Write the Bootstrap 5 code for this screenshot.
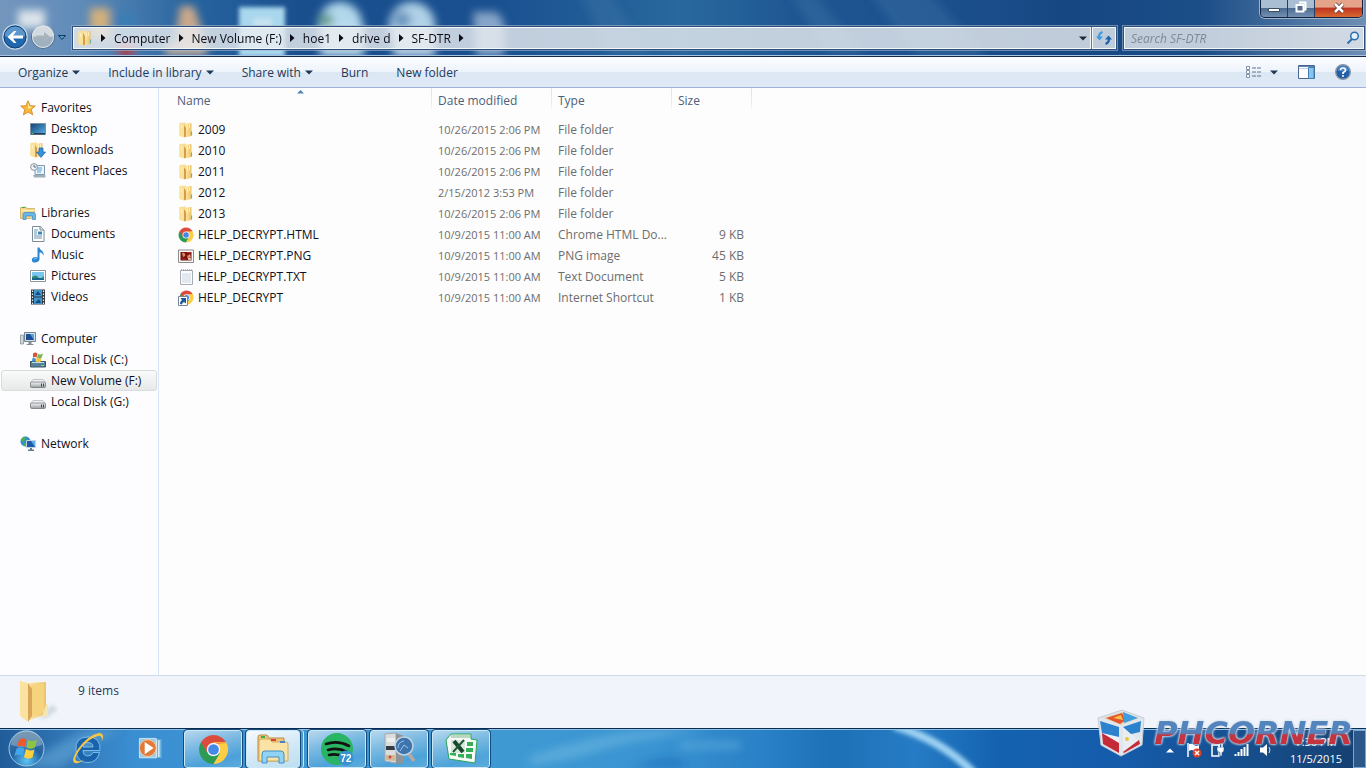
<!DOCTYPE html>
<html lang="en">
<head>
<meta charset="utf-8">
<meta name="viewport" content="width=device-width, initial-scale=1">
<title>SF-DTR</title>
<link href="https://cdn.jsdelivr.net/npm/bootstrap@5.3.0/dist/css/bootstrap.min.css" rel="stylesheet">
<style>
  body { font-family: "Open Sans", "Noto Sans", sans-serif; font-size: 12px; line-height: 21px; color: #101020; background: #fdfdfd; }
  svg { display: block; flex: none; }
  button { font: inherit; color: inherit; background: none; border: 0; padding: 0; }
  .i16 { width: 16px; height: 16px; }
  .i32 { width: 34px; height: 34px; }
  .wallpaper { z-index: 0; }

  /* glass frame with navigation */
  .frame-top { height: 57px; padding: 0 1px 6px 2px; background: #1c4f8d; border-bottom: 1px solid #14294a; box-shadow: inset 0 -1px 0 #a9c4de; gap: 6px; }
  .win-ctl { top: 0; right: 3px; height: 18px; border: 1px solid #13233f; border-top: 0; border-radius: 0 0 5px 5px; box-shadow: 0 0 0 1px #9db4cf; overflow: hidden; }
  .win-ctl button { width: 27px; border-right: 1px solid #24405f; background: linear-gradient(#a9bdd3 45%, #4d6c92 50%, #7391b2); }
  .win-ctl .close-btn { width: 47px; border: 0; background: linear-gradient(#e5a48a 40%, #bf3520 50%, #d9692f); }
  .nav-btns { gap: 2px; }
  .address { height: 24px; border: 1px solid #2c4f7c; box-shadow: 0 0 0 1px #a5b6ca99; }
  .address .wash { background: rgba(235, 238, 240, .8); box-shadow: inset 0 0 0 1px #f4f7fa; }
  .address .refresh { border-left: 1px solid #5d7a9c; }
  .crumb { color: #0a0a14; }
  .search-box { width: 242px; }
  .search-box input { border: 0; background: none; font-style: italic; color: #101020; padding: 0 0 0 7px; outline: 0; }
  .search-box input::placeholder { color: #7d8a93; opacity: 1; }

  /* command bar */
  .commands { height: 31px; color: #1e395b; padding: 0 15px 0 18px; background: linear-gradient(#fbfdff, #eef4fc 48%, #dce7f4 52%, #e0eaf6); border-bottom: 1px solid #9fb4d6; }
  .commands .cmds { gap: 28px; }
  .commands button { display: flex; align-items: center; gap: 4px; }

  /* navigation pane */
  .side { width: 159px; border-right: 1px solid #d6e5f5; padding: 9px 1px 0; background: #fdfdff; }
  .side ul { margin: 0 0 21px; padding: 0; list-style: none; }
  .side a { display: flex; align-items: center; gap: 5px; height: 21px; padding-left: 28px; color: #101020; text-decoration: none; border: 1px solid transparent; border-radius: 3px; white-space: nowrap; }
  .side a.top-item { padding-left: 18px; }
  .side a.current { border-color: #d9dbdd; background: linear-gradient(#f9fafa, #e7e9e9); }

  /* file list */
  .files { width: 593px; table-layout: fixed; border-collapse: collapse; margin: 0; }
  .files th { height: 31px; font-weight: 400; color: #4c607a; vertical-align: top; padding: 2px 6px 0; background: linear-gradient(#d8e5f3, #e8eff8 70%, #fdfdfd) right top / 1px 24px no-repeat; }
  .files td { height: 21px; padding: 0 6px; color: #6d6d6d; white-space: nowrap; }
  .files th:first-child { padding-left: 18px; }
  .files td:first-child { padding-left: 19px; color: #101020; }
  .files td:nth-child(2) { font-size: 11px; }
  .files .fname { gap: 4px; }
  .files td:last-child { text-align: right; padding-right: 8px; }
  .sort-mark { top: 2px; left: 138px; }

  .details { height: 53px; background: #f1f5fb; border-top: 1px solid #ccdaea; padding: 4px 18px; gap: 20px; color: #1e395b; }

  /* taskbar */
  .taskbar { height: 40px; border-top: 1px solid #0b2c50; background: #1560ad; box-shadow: inset 0 1px 0 #8fc0e6; padding: 0 13px 0 0; }
  .slot { width: 62px; }
  .start { width: 53px; }
  .tasks { gap: 4px; padding: 1px 0 0 3px; }
  .task { width: 58px; border: 1px solid #cbe8f8; outline: 1px solid #164a7c; border-radius: 3px; background: linear-gradient(165deg, #c9e2f2dd, #8fc5e6bb 40%, #58aadd99 75%, #6bb6e2aa); }
  .task.active { background: linear-gradient(160deg, #f6fafe, #cfe7f5 60%, #bcdff2); width: 54px; margin-right: 4px; box-shadow: 3px 0 0 #4f9bd0, 4px 0 0 #cbe8f8; }
  .tray { color: #fff; gap: 8px; margin-right: 11px; padding-top: 3px; }
  .clock { font-size: 11px; line-height: 17px; text-align: center; padding-left: 9px; }
  .peek { right: 0; top: 1px; bottom: 0; width: 13px; border: 1px solid #7ca6cc; background: #5b88b955; }
  .brand { right: 13px; bottom: 11px; z-index: 5; gap: 8px; pointer-events: none; }
  .brand-word { font: italic bold 32px/36px "DejaVu Sans", sans-serif; color: transparent; background: linear-gradient(#5484bd 50%, #c33440 56%); -webkit-background-clip: text; background-clip: text; filter: drop-shadow(0 0 1px #e6edf4) drop-shadow(0 0 1px #c9d6e4); }
</style>
</head>
<body>
<svg width="0" height="0" class="position-absolute" aria-hidden="true">
  <defs>
    <linearGradient id="gf" x1="0" x2="1"><stop offset="0" stop-color="#fce9a8"/><stop offset="1" stop-color="#eec267"/></linearGradient>
    <linearGradient id="gb" x1="0" y1="0" x2="1" y2="1"><stop offset="0" stop-color="#14406f"/><stop offset="1" stop-color="#59b2ec"/></linearGradient>
    <linearGradient id="gd" x1="0" y1="0" x2="0" y2="1"><stop offset="0" stop-color="#f5f5f5"/><stop offset="1" stop-color="#999fa3"/></linearGradient>
    <radialGradient id="orb" cx=".5" cy=".85" r=".85"><stop offset="0" stop-color="#5cc4f5"/><stop offset=".5" stop-color="#2264a3"/><stop offset="1" stop-color="#4e7295"/></radialGradient>
    <filter id="b4" x="-30%" y="-30%" width="160%" height="160%"><feGaussianBlur stdDeviation="4"/></filter>
    <filter id="b2" x="-30%" y="-30%" width="160%" height="160%"><feGaussianBlur stdDeviation="2"/></filter>
  </defs>
  <symbol id="folder" viewBox="0 0 16 16"><path d="M1.500 1 8 .500v13L1.500 14z" fill="#f9dd92"/><path d="M7 2 13.500 1v13L7 15.500z" fill="url(#gf)"/><path d="M1.500 1.500 6 3v12.500L1.500 14z" fill="#fae29b"/><path d="M6 3 8 6v8.500l-2 1z" fill="#d79b4c"/><path d="M9.500 2.500v5M11.500 2v4" stroke="#fff0b8"/><path d="M3.500 3v4" stroke="#fdf0c0"/><path d="M13.500 9.500v4" stroke="#6daea9" stroke-width="1.200"/></symbol>
  <symbol id="star" viewBox="0 0 16 16"><path d="M8 .8 10.100 5.700l5.200.3-4 3.500 1.400 5.300L8 12l-4.600 2.900 1.300-5.300L.7 6l5.200-.3z" fill="#f8b93b" stroke="#cf7d1d" stroke-width=".8"/><path d="M8 2.500 9.300 6.500 13 7 8 9z" fill="#ffe994"/></symbol>
  <symbol id="desktop" viewBox="0 0 16 16"><path d="M.5 2.500h15v11H.5z" fill="url(#gb)" stroke="#7b93a3"/><path d="M1 12h14v1.500H1z" fill="#223a53"/><path d="M1.500 12.500h2" stroke="#59c06b"/></symbol>
  <symbol id="downloads" viewBox="0 0 16 16"><use href="#folder" x="-1"/><path d="M9 6h4v4h2.500L11 15.500 6.500 10H9z" fill="#3592dc" stroke="#1b63a8" stroke-width=".7"/></symbol>
  <symbol id="recent" viewBox="0 0 16 16"><path d="M5 2.500h9.500v9H5z" fill="#eaf4fb" stroke="#7f97ab"/><path d="M7 5h5M7 7h5M7 9h4" stroke="#59a0d4"/><path d="M3 12h12.500v2.500H4z" fill="#9fb0bb"/><circle cx="4" cy="4" r="3.400" fill="#eef3f5" stroke="#8595a1"/><path d="M4 2v2h2" fill="none" stroke="#567"/></symbol>
  <symbol id="libraries" viewBox="0 0 16 16"><path d="M.5 2.500 6 2l1 1.500h7.500v10H.5z" fill="#f5d789" stroke="#c9a052" stroke-width=".7"/><path d="M2 2.500h3" stroke="#46a84c"/><path d="M1 5.500h14" stroke="#fff2bf"/><path d="M3 14.500V9.500q0-2 2-2h8q2.500 0 2.500 2v5h-3V11H6v3.500z" fill="#66b7ea" stroke="#3c86c0" stroke-width=".7"/></symbol>
  <symbol id="document" viewBox="0 0 16 16"><path d="M2.500.5h8l3.500 3.500v11.500H2.500z" fill="#fff" stroke="#7d8c98"/><path d="M10 .5V4h4" fill="#dfe6eb" stroke="#7d8c98"/><path d="M4 4h4M4 6h3M4 8h3M4 10h8M4 12h8" stroke="#6c91ab"/><path d="M8 5.500h4v3H8z" fill="#3c87b9"/></symbol>
  <symbol id="music" viewBox="0 0 16 16"><path d="M7.500.5h2c.5 3 5 3.500 4 8-1-2.500-2.500-3-4-3v6.500c0 2-2 3.500-4.500 3.500S1.500 14 2 12.300s3-2.800 5.500-1.800z" fill="#2c86d1"/><path d="M4 12.500q1-1.500 3-1.500" stroke="#9ad3fa" fill="none"/></symbol>
  <symbol id="picture" viewBox="0 0 16 16"><path d="M.5 2.500h15v11H.5z" fill="#fff" stroke="#8a979f"/><path d="M2 4h12v8H2z" fill="#79c5ec"/><path d="M2 9q4-3 6 0t6-1v4H2z" fill="#2f8a6c"/><path d="M2 10.500q6-1 12 .5v1H2z" fill="#176094"/></symbol>
  <symbol id="video" viewBox="0 0 16 16"><path d="M1 .5h14v15H1z" fill="#30373d"/><path d="M4 1h8v6.500H4zM4 8.500h8V15H4z" fill="#3d95d1"/><path d="M5 6 8 2l3 4M5 14l4-4 2 4" fill="#184b78"/><path d="M2.500 1.500v14M13.500 1.500v14" stroke="#eee" stroke-width="1.200" stroke-dasharray="1.500 1.500"/></symbol>
  <symbol id="computer" viewBox="0 0 16 16"><path d="M.5 4h3v9h-3z" fill="#d0d7da" stroke="#78878f" stroke-width=".7"/><path d="M4.500 1.500h11v9h-11z" fill="#d5e0e6" stroke="#74868f"/><path d="M6 3h8v6H6z" fill="#1c4f95"/><path d="M10 3h4v6z" fill="#57a3df"/><path d="M8.500 11h3v2h2v1h-7v-1h2z" fill="#7f9199"/></symbol>
  <symbol id="drive" viewBox="0 0 16 16"><path d="M3 6.500h10l2.500 3.500H.5z" fill="#f2f3f3" stroke="#a2a7aa" stroke-width=".6"/><path d="M.5 10q0-1 1-1h13q1 0 1 1v3q0 1.500-1 1.500h-13q-1 0-1-1.500z" fill="url(#gd)" stroke="#74797d" stroke-width=".8"/><path d="M11.500 10.500v3M13.500 10.500v3" stroke="#3b4b48"/></symbol>
  <symbol id="sysdrive" viewBox="0 0 16 16"><path d="M.5 9.500h15v5.500H.5z" fill="#58819b" stroke="#3e5563"/><path d="M2 10.500h12" stroke="#bfe1e9"/><path d="M11 13.500h3" stroke="#6fd47a"/><path d="M3 1.500q2-2 4.500 0l-1 4q-2-1-3.500.5z" fill="#dc5437"/><path d="M8 2q2 1 5-.5L11.500 6Q9 8 7 5.500z" fill="#7db858"/><path d="m2.500 6 3.500.5-.5 3H2z" fill="#3f90ce"/><path d="M6.500 6 11.500 6.500 10.500 10H6z" fill="#f1c43d"/></symbol>
  <symbol id="network" viewBox="0 0 16 16"><circle cx="5.500" cy="5.500" r="5" fill="#2f8fd0"/><path d="M2 2q3-2 4-1L5 4 2 6.500zM3 8l3-1 1 3-2 .5z" fill="#48b057"/><path d="M6.500 4.500h9v7h-9z" fill="#1d5ba8" stroke="#c3d5e1"/><path d="M11 5h4v6z" fill="#5cb0ea"/><path d="M10 12h2v1.500h2v1.500H8v-1.500h2z" fill="#5c7e92"/></symbol>
  <symbol id="chrome" viewBox="0 0 32 32"><path d="M16 16 3.100 8.500A15 15 0 0 1 29 8.500z" fill="#dd4b3e"/><path d="M16 16 3.100 8.500A15 15 0 0 0 16 31l6.500-11z" fill="#2c9c55"/><path d="M16 16 22.500 20 16 31A15 15 0 0 0 29 8.500H16z" fill="#fdcd45"/><path d="M3.100 8.500 10 20l4-10h15" fill="#dd4b3e"/><circle cx="16" cy="16" r="7" fill="#f5f5f5"/><circle cx="16" cy="16" r="5.500" fill="#4589e8"/></symbol>
  <symbol id="pngfile" viewBox="0 0 16 16"><path d="M.5 2h15v12.500H.5z" fill="#f8f8f8" stroke="#8d8d8d"/><path d="M2.500 4h11v8.500h-11z" fill="#76150f"/><path d="M4 5q2-1 3 1t-2 3zM9 8l3-2 1 3-3 2z" fill="#dc8b6d"/><path d="M9 4.500h4M4 11h4" stroke="#b32c24"/><path d="M10 11h3" stroke="#f6e6de" stroke-width="1.500"/></symbol>
  <symbol id="txtfile" viewBox="0 0 16 16"><path d="M2.500 1.500h12v14h-12z" fill="#fdfdfd" stroke="#a6adb4"/><path d="M4 5h9M4 7h9M4 9h9M4 11h9M4 13h9" stroke="#c6d3df"/><path d="M3 1h11" stroke="#7d868e" stroke-dasharray="1 1"/></symbol>
  <symbol id="urlfile" viewBox="0 0 16 16"><use href="#chrome" x="1" width="15" height="15"/><path d="M.5 6.500h9v9h-9z" fill="#fff" stroke="#768596"/><path d="M2 14q0-3 2-4L2.500 8H8v5.500L6 12q-2 .5-2 2.500z" fill="#1b5799"/></symbol>
  <symbol id="caret" viewBox="0 0 8 5"><path d="M0 .5h8L4 4.500z"/></symbol>
  <symbol id="sep" viewBox="0 0 5 8"><path d="M0 0 4.500 4 0 8z" fill="#0a0a14"/></symbol>
</svg>

<div class="d-flex flex-column vh-100 overflow-hidden position-relative">
  <header class="frame-top position-relative d-flex align-items-end flex-shrink-0">
    <svg class="wallpaper position-absolute top-0 start-0 w-100" height="55" viewBox="0 0 1366 55" preserveAspectRatio="none" aria-hidden="true">
      <linearGradient id="sky"><stop offset="0" stop-color="#7496bd"/><stop offset=".06" stop-color="#5f8bb9"/><stop offset=".14" stop-color="#27649f"/><stop offset=".22" stop-color="#1a4f8e"/><stop offset=".36" stop-color="#1a5090"/><stop offset=".5" stop-color="#28689e"/><stop offset=".58" stop-color="#1f5793"/><stop offset=".7" stop-color="#1b4f8c"/><stop offset=".78" stop-color="#164783"/><stop offset=".88" stop-color="#1b4d87"/><stop offset="1" stop-color="#6f8fb4"/></linearGradient>
      <path d="M0 0h1366v55H0z" fill="url(#sky)"/>
      <g filter="url(#b4)">
        <path d="M580-5h30l40 60h-40zM790-5h25l50 60h-35zM870-5h60l60 65h-70z" fill="#4679a8" opacity=".35"/>
        <path d="M18 10h27v18H18z" fill="#dce4ea"/><path d="M90 8h20v30H90z" fill="#d2b07c"/><path d="M116 12h20v44h-20z" fill="#3a7eb4"/><path d="M118 44h16v12h-16z" fill="#b23434"/>
        <path d="M180 6h14l14 44h-34z" fill="#cba88b"/><path d="M165 44h42v11h-42z" fill="#cdb29d"/>
        <circle cx="340" cy="24" r="22" fill="#b2d8ec"/><path d="M320 26h44v30h-44z" fill="#c2deed"/><circle cx="326" cy="20" r="7" fill="#5e9a86"/>
        <circle cx="412" cy="25" r="23" fill="#b0d1e7"/><path d="M393 28h42v28h-42z" fill="#c2d9ea"/><circle cx="402" cy="20" r="9" fill="#6b95be"/>
        <path d="M473 12h24l7 10v34h-28z" fill="#87a5c8"/>
      </g>
      <path d="M239 7h46v50h-46z" fill="#a9d7ed" filter="url(#b2)"/>
      <path d="M253 18h19v10h-19z" fill="#c5e2f0" filter="url(#b2)"/>
    </svg>
    <div class="win-ctl position-absolute d-flex">
      <button aria-label="Minimize" class="d-flex justify-content-center"><svg width="14" height="14"><path d="M1.500 8.500h11v3h-11z" fill="#fff" stroke="#3d4d61"/></svg></button>
      <button aria-label="Restore" class="d-flex justify-content-center"><svg width="14" height="14"><path d="M5 2.500h6.500v7H10" fill="none" stroke="#fff" stroke-width="2"/><path d="M2.500 5h7v6.500h-7z" fill="#536f92" stroke="#fff" stroke-width="2"/></svg></button>
      <button aria-label="Close" class="close-btn d-flex justify-content-center"><svg width="14" height="15"><path d="m3 4 8 8m0-8-8 8" stroke="#5d3334" stroke-width="4"/><path d="m3 4 8 8m0-8-8 8" stroke="#fff" stroke-width="2.500"/></svg></button>
    </div>
    <div class="nav-btns position-relative d-flex align-items-center">
      <button aria-label="Back"><svg width="26" height="26" viewBox="0 0 26 26"><circle cx="13" cy="13" r="12" fill="#2068b0" stroke="#c7d9e8" stroke-width="1.500"/><path d="M2 12a11 11 0 0 1 22 0q-11 4-22 0z" fill="#75abd8" opacity=".7"/><circle cx="13" cy="13" r="11" fill="none" stroke="#123f71"/><path d="M5.500 13 12 7h2.500l-3.500 4.500H21v3H11l3.500 4.500H12z" fill="#fff"/></svg></button>
      <button aria-label="Forward"><svg width="26" height="26" viewBox="0 0 26 26"><circle cx="13" cy="13" r="11.500" fill="#9fb0c1" stroke="#4f6b8b"/><path d="M2 12a11 11 0 0 1 22 0q-11 4-22 0z" fill="#d3dae0"/><circle cx="13" cy="13" r="10.500" fill="none" stroke="#dde5eb"/><path d="M20.500 13 14 8v3.500H6v3h8V18z" fill="#a9b3bc"/></svg></button>
      <button aria-label="Recent pages"><svg width="8" height="5" viewBox="0 0 8 5"><path d="M.5.5h7l-3.500 4z" fill="#4ea0d0" stroke="#12375f"/></svg></button>
    </div>
    <div class="address position-relative flex-grow-1 d-flex">
      <nav class="wash flex-grow-1 d-flex align-items-center ps-1" aria-label="Address">
        <svg class="i16 me-1"><use href="#folder"/></svg>
        <svg class="ms-1" width="5" height="8"><use href="#sep"/></svg>
        <button class="crumb ms-2">Computer</button><svg class="ms-2" width="5" height="8"><use href="#sep"/></svg>
        <button class="crumb ms-2">New Volume (F:)</button><svg class="ms-2" width="5" height="8"><use href="#sep"/></svg>
        <button class="crumb ms-2">hoe1</button><svg class="ms-2" width="5" height="8"><use href="#sep"/></svg>
        <button class="crumb ms-2">drive d</button><svg class="ms-2" width="5" height="8"><use href="#sep"/></svg>
        <button class="crumb ms-2">SF-DTR</button><svg class="ms-2" width="5" height="8"><use href="#sep"/></svg>
        <button class="ms-auto" aria-label="Previous locations"><svg class="mx-1" width="8" height="5"><use href="#caret" fill="#1a2a3c"/></svg></button>
      </nav>
      <button class="wash refresh px-1" aria-label="Refresh"><svg width="16" height="16" viewBox="0 0 16 16"><path d="M3 8Q2.500 3.500 6.500 2" fill="none" stroke="#3f9bdc" stroke-width="2.200"/><path d="M0 6.500h7L3.500 10.500z" fill="#3f9bdc"/><path d="M13 8q.5 4.500-3.500 6" fill="none" stroke="#1b64ae" stroke-width="2.200"/><path d="M9 9.500h7L12.500 5.500z" fill="#1b64ae"/></svg></button>
    </div>
    <div class="address search-box position-relative d-flex">
      <div class="wash flex-grow-1 d-flex align-items-center">
        <input type="search" class="flex-grow-1" aria-label="Search" placeholder="Search SF-DTR">
        <svg class="me-1" width="14" height="14" viewBox="0 0 14 14"><circle cx="8.500" cy="5" r="3.800" fill="#e4f1fa" stroke="#2a6fae" stroke-width="1.500"/><path d="M6 8 1.500 12.500" stroke="#2a6fae" stroke-width="2"/></svg>
      </div>
    </div>
  </header>

  <div class="commands d-flex align-items-center justify-content-between flex-shrink-0">
    <div class="cmds d-flex">
      <button>Organize <svg width="8" height="5" fill="#1e395b"><use href="#caret"/></svg></button>
      <button>Include in library <svg width="8" height="5" fill="#1e395b"><use href="#caret"/></svg></button>
      <button>Share with <svg width="8" height="5" fill="#1e395b"><use href="#caret"/></svg></button>
      <button>Burn</button>
      <button>New folder</button>
    </div>
    <div class="d-flex align-items-center">
      <button aria-label="Change view"><svg width="16" height="14" viewBox="0 0 16 14"><path d="M.5 1.500h3v3h-3zM.5 5.500h3v3h-3zM.5 9.500h3v3h-3z" fill="#fff" stroke="#8792ab"/><path d="M6 3h4M11 3h4M6 7h4M11 7h4M6 11h4M11 11h4" stroke="#5f7391"/></svg></button>
      <button class="ms-2 me-3 pe-1" aria-label="More views"><svg width="8" height="5" fill="#1e395b"><use href="#caret"/></svg></button>
      <button class="me-3 pe-1" aria-label="Show the preview pane"><svg width="17" height="14" viewBox="0 0 17 14"><path d="M.5.5h16v13H.5z" fill="#fff" stroke="#46658f"/><path d="M1 1.500h15" stroke="#5b84b4" /><path d="M1 3.500h15" stroke="#c5d3e4"/><path d="M10.500 2.500v11H16v-11z" fill="#85c6ef" stroke="#447eb5"/></svg></button>
      <button aria-label="Help"><svg width="16" height="16" viewBox="0 0 16 16"><circle cx="8" cy="8" r="7.300" fill="#215fa9" stroke="#8b98a8" stroke-width="1.400"/><path d="M2.500 7a5.500 5.500 0 0 1 11 0z" fill="#5e9fdb" opacity=".6"/><path d="M5.500 6.300Q5.500 4 8 4t2.500 2.200Q10.500 7.500 8 8.500V10" fill="none" stroke="#fff" stroke-width="1.700"/><circle cx="8" cy="12" r="1" fill="#fff"/></svg></button>
    </div>
  </div>

  <main class="d-flex flex-grow-1 overflow-hidden">
    <nav class="side flex-shrink-0" aria-label="Navigation pane">
      <ul>
        <li><a href="#" class="top-item"><svg class="i16"><use href="#star"/></svg>Favorites</a></li>
        <li><a href="#"><svg class="i16"><use href="#desktop"/></svg>Desktop</a></li>
        <li><a href="#"><svg class="i16"><use href="#downloads"/></svg>Downloads</a></li>
        <li><a href="#"><svg class="i16"><use href="#recent"/></svg>Recent Places</a></li>
      </ul>
      <ul>
        <li><a href="#" class="top-item"><svg class="i16"><use href="#libraries"/></svg>Libraries</a></li>
        <li><a href="#"><svg class="i16"><use href="#document"/></svg>Documents</a></li>
        <li><a href="#"><svg class="i16"><use href="#music"/></svg>Music</a></li>
        <li><a href="#"><svg class="i16"><use href="#picture"/></svg>Pictures</a></li>
        <li><a href="#"><svg class="i16"><use href="#video"/></svg>Videos</a></li>
      </ul>
      <ul>
        <li><a href="#" class="top-item"><svg class="i16"><use href="#computer"/></svg>Computer</a></li>
        <li><a href="#"><svg class="i16"><use href="#sysdrive"/></svg>Local Disk (C:)</a></li>
        <li><a href="#" class="current"><svg class="i16"><use href="#drive"/></svg>New Volume (F:)</a></li>
        <li><a href="#"><svg class="i16"><use href="#drive"/></svg>Local Disk (G:)</a></li>
      </ul>
      <ul>
        <li><a href="#" class="top-item"><svg class="i16"><use href="#network"/></svg>Network</a></li>
      </ul>
    </nav>
    <section class="flex-grow-1 overflow-hidden position-relative">
      <svg class="sort-mark position-absolute" width="7" height="4"><path d="M0 3.500 3.500 0 7 3.500z" fill="#4b84b5"/></svg>
      <table class="files">
        <colgroup><col style="width:273px"><col style="width:120px"><col style="width:120px"><col style="width:80px"></colgroup>
        <thead><tr><th>Name</th><th>Date modified</th><th>Type</th><th>Size</th></tr></thead>
        <tbody>
          <tr><td><div class="fname d-flex align-items-center"><svg class="i16"><use href="#folder"/></svg>2009</div></td><td>10/26/2015 2:06 PM</td><td>File folder</td><td></td></tr>
          <tr><td><div class="fname d-flex align-items-center"><svg class="i16"><use href="#folder"/></svg>2010</div></td><td>10/26/2015 2:06 PM</td><td>File folder</td><td></td></tr>
          <tr><td><div class="fname d-flex align-items-center"><svg class="i16"><use href="#folder"/></svg>2011</div></td><td>10/26/2015 2:06 PM</td><td>File folder</td><td></td></tr>
          <tr><td><div class="fname d-flex align-items-center"><svg class="i16"><use href="#folder"/></svg>2012</div></td><td>2/15/2012 3:53 PM</td><td>File folder</td><td></td></tr>
          <tr><td><div class="fname d-flex align-items-center"><svg class="i16"><use href="#folder"/></svg>2013</div></td><td>10/26/2015 2:06 PM</td><td>File folder</td><td></td></tr>
          <tr><td><div class="fname d-flex align-items-center"><svg class="i16"><use href="#chrome"/></svg>HELP_DECRYPT.HTML</div></td><td>10/9/2015 11:00 AM</td><td>Chrome HTML Do...</td><td>9 KB</td></tr>
          <tr><td><div class="fname d-flex align-items-center"><svg class="i16"><use href="#pngfile"/></svg>HELP_DECRYPT.PNG</div></td><td>10/9/2015 11:00 AM</td><td>PNG image</td><td>45 KB</td></tr>
          <tr><td><div class="fname d-flex align-items-center"><svg class="i16"><use href="#txtfile"/></svg>HELP_DECRYPT.TXT</div></td><td>10/9/2015 11:00 AM</td><td>Text Document</td><td>5 KB</td></tr>
          <tr><td><div class="fname d-flex align-items-center"><svg class="i16"><use href="#urlfile"/></svg>HELP_DECRYPT</div></td><td>10/9/2015 11:00 AM</td><td>Internet Shortcut</td><td>1 KB</td></tr>
        </tbody>
      </table>
    </section>
  </main>

  <div class="details d-flex flex-shrink-0">
    <svg width="40" height="43" viewBox="0 0 40 43"><path d="M20 38 34 25l6 4-12 9z" fill="#b8c4cd" opacity=".6" filter="url(#b2)"/><path d="M10 3 28 2v32L12 40z" fill="url(#gf)"/><path d="M13 4.500 26 4v28l-13 5z" fill="#f6d47e"/><path d="M28 24l2 1v11l-6 1z" fill="#f4e4b4"/><path d="M2 1l8 2 3 5v29l-3 5-8-6z" fill="#fae3a0"/><path d="M10 3 14 9v27l-4 6z" fill="#d9a55a"/></svg>
    <span>9 items</span>
  </div>

  <footer class="taskbar position-relative d-flex flex-shrink-0">
    <svg class="wallpaper position-absolute bottom-0 start-0 w-100" height="38" viewBox="0 0 1366 37" preserveAspectRatio="none" aria-hidden="true">
      <linearGradient id="sea"><stop offset="0" stop-color="#205c99"/><stop offset=".05" stop-color="#3278b8"/><stop offset=".1" stop-color="#3a8fd2"/><stop offset=".2" stop-color="#3d95d2"/><stop offset=".36" stop-color="#3f9ad3"/><stop offset=".48" stop-color="#3a94d2"/><stop offset=".56" stop-color="#2980c6"/><stop offset=".61" stop-color="#1d71b6"/><stop offset=".67" stop-color="#267cc5"/><stop offset=".73" stop-color="#1462b0"/><stop offset=".82" stop-color="#155cab"/><stop offset=".93" stop-color="#164c87"/><stop offset="1" stop-color="#153f70"/></linearGradient>
      <path d="M0 0h1366v37H0z" fill="url(#sea)"/>
      <g filter="url(#b4)"><path d="M530 25q60-20 120-25h60q-80 10-110 20t-70 15zM680 12h60v6h-60z" fill="#69b6df" opacity=".6"/><path d="M630 37q30-15 50-9l10 9z" fill="#2171bd" opacity=".6"/><path d="M20 37Q60 10 90 0h30Q80 20 60 37z" fill="#63a6d7" opacity=".6"/></g>
      <path d="M894-4q48 14 80 46" fill="none" stroke="#9dd2f3" stroke-width="8" filter="url(#b2)"/>
    </svg>
    <button class="start position-relative d-flex align-items-center justify-content-center" aria-label="Start"><svg width="37" height="37" viewBox="0 0 37 37"><circle cx="18.500" cy="18.500" r="17.500" fill="url(#orb)" stroke="#9cc8e6"/><path d="M3 15a15.500 15 0 0 1 31 0q-15 5-31 0z" fill="#c1d4e2" opacity=".4"/><path d="M11 10q4-3 7.500-.5L17 17q-3.500-2.500-8 0z" fill="#ed5a2b"/><path d="M20 10q4 2.500 9-.5l-2 8q-4 2.500-8.500 0z" fill="#8dc448"/><path d="M8.500 18.500q4-2.500 8 0l-2 7.500q-4-2.500-8 0z" fill="#43a5ea"/><path d="M18 19q4 2.500 8.500.5l-2 8q-4 2.500-8.500-.5z" fill="#fccf3c"/></svg></button>
    <button class="slot ms-1 position-relative d-flex align-items-center justify-content-center" aria-label="Internet Explorer"><svg class="i32" viewBox="0 0 34 34"><path d="M28.500 20.500H22q-1.500 3.500-5 3.500-5 0-5-5.500h17q1-13.500-12-13.500T5 18t12 12.500q9 0 11.500-10zM12 15q0-4.500 5-4.500t5 4.500z" fill="#1863ab" stroke="#8fcdf2" stroke-width=".8" fill-rule="evenodd"/><path d="M4 31Q-1 29 7 17 17 3 28 1q6 0 3 8 0-6-4-5Q16 7 8 19 2 28 6 29q4 1 8-2-6 5-10 4z" fill="#f8c444"/></svg></button>
    <button class="slot position-relative d-flex align-items-center justify-content-center" aria-label="Media Player"><svg width="30" height="30" viewBox="0 0 34 34"><path d="M8 6h22v21H8z" fill="#6db5df"/><path d="M27 7v19M24 6v21" stroke="#e2f2fb" stroke-width="1.500"/><path d="M5 5h19v22H5z" fill="#9acae7" stroke="#d1e8f5"/><circle cx="14.500" cy="16" r="9.500" fill="#e27a38" stroke="#f8c9a2"/><path d="m11 9 10 7-10 7z" fill="#fff"/></svg></button>
    <div class="tasks position-relative d-flex">
      <button class="task d-flex align-items-center justify-content-center" aria-label="Chrome"><svg width="31" height="31"><use href="#chrome"/></svg></button>
      <button class="task active d-flex align-items-center justify-content-center" aria-label="Explorer"><svg class="i32" viewBox="0 0 34 34"><path d="M2 5q0-2 2-2h7l2 3h15v23H2z" fill="#edc578" stroke="#bd8c44"/><path d="M5 7h9l2 3h14q2 0 2 2v17H3V9z" fill="#fae3a5" stroke="#d5ab62"/><path d="M5 5h4" stroke="#3cae53" stroke-width="2"/><path d="M15 8h5" stroke="#d54334" stroke-width="2"/><path d="M24 10h5" stroke="#4784c2" stroke-width="2"/><path d="M6 31V22q0-3 3-3h16q3 0 3 3v9h-5v-6H11v6z" fill="#91d3f3" stroke="#458fc3"/></svg></button>
      <button class="task d-flex align-items-center justify-content-center" aria-label="Spotify"><svg class="i32" viewBox="0 0 34 34"><circle cx="17" cy="17" r="16" fill="#29b563"/><path d="M6 12q12-4 23 2M8 18q10-3 19 2M9 23q8-2 15 2" fill="none" stroke="#111" stroke-width="2.600" stroke-linecap="round"/><circle cx="26" cy="26" r="7.500" fill="#3792cf"/><text x="26" y="30" text-anchor="middle" font-family="Liberation Sans, sans-serif" font-weight="bold" font-size="10" fill="#fff">72</text></svg></button>
      <button class="task d-flex align-items-center justify-content-center" aria-label="Disk tool"><svg class="i32" viewBox="0 0 34 34"><path d="M3 2 14 1v30l-11-2z" fill="#dcdddd" stroke="#aaa"/><path d="M14 1l8 3v27l-8 1z" fill="#8e9498"/><path d="M5 7h8M5 9h8" stroke="#fff"/><path d="M4 14h9v4H4z" fill="#333c45"/><path d="M4 23h9v6l-9-1z" fill="#d0b89b"/><circle cx="8" cy="25" r="1.500" fill="#d1472b"/><circle cx="22" cy="14" r="9" fill="#3f75ad" stroke="#c3d6e4" stroke-width="1.500"/><path d="M16 16q0-6 6-7M18 19l4-6 4 3" stroke="#9cc4e6" fill="none"/><path d="m27 22 5 7" stroke="#b9a8a2" stroke-width="3.500"/></svg></button>
      <button class="task d-flex align-items-center justify-content-center" aria-label="Excel"><svg class="i32" viewBox="0 0 34 34"><path d="M7 2h20v5l6 1-2 23-26-4-3-19z" fill="#f7fbf8" stroke="#25a556"/><path d="M7 3h19v3H7z" fill="#bcd6c2"/><path d="M7 8h14v13H7z" fill="#d9e8dd"/><path d="m10 9 9 11" stroke="#17462d" stroke-width="4"/><path d="m20 8-11 12" stroke="#1d5a38" stroke-width="2"/><path d="M23 10h6v4h-6zM22 16h7v4h-7zM22 22h6v5l-6-1zM14 22h6v4l-6-1zM6 21h6v3l-6-1z" fill="#36af5a"/></svg></button>
    </div>
    <div class="tray position-relative d-flex align-items-center ms-auto">
      <svg width="8" height="5"><path d="M0 4.500 4 .5l4 4z" fill="#fff"/></svg>
      <svg class="ms-1" width="16" height="16" viewBox="0 0 16 16"><path d="M2 1v14" stroke="#fff" stroke-width="1.500"/><path d="M3 2q3-1 5 1t5 0v7q-3 1-5-1t-5 0z" fill="#fff"/><circle cx="11" cy="11" r="4.500" fill="#d9412a"/><path d="m9 9 4 4m0-4-4 4" stroke="#fff" stroke-width="1.500"/></svg>
      <svg width="16" height="16" viewBox="0 0 16 16"><path d="M2 3h7v11H2z" fill="none" stroke="#fff" stroke-width="1.500"/><path d="M4 1h3" stroke="#fff"/><path d="M7 5h7v3q0 2-2 2.500V14h-2v-3.500Q7 10 7 8z" fill="#fff" stroke="#17508e" stroke-width=".6"/><path d="M9 2v3M12 2v3" stroke="#fff" stroke-width="1.500"/></svg>
      <svg width="16" height="14" viewBox="0 0 16 14"><path d="M1.500 11v2M4.500 9v4M7.500 6v7M10.500 4v9M13.500 1v12" stroke="#fff" stroke-width="2"/></svg>
      <svg width="15" height="14" viewBox="0 0 15 14"><path d="M2 4.500h3L9 1v12L5 9.500H2z" fill="#fff"/><path d="M11 4q2 3 0 6" stroke="#cfe3f3" fill="none"/></svg>
      <div class="clock">7:30 PM<br>11/5/2015</div>
    </div>
    <div class="peek position-absolute"></div>
    <div class="brand position-absolute d-flex align-items-center">
      <svg width="50" height="48" viewBox="0 0 50 48"><path d="M2 9 26 1 48 9 46 36 25 47 5 36z" fill="#dfe6ec" stroke="#c4cdd6"/><path d="M7 9 26 3l17 6-18 7z" fill="#e3d3b8"/><path d="M10 9 26 4l4 7-6 4z" fill="#e5542a"/><path d="m17 9 8-3 2 5z" fill="#f5c04a"/><path d="m27 3 15 6-14 5z" fill="#3e9fe0"/><path d="m4 12 19 6v13L6 24z" fill="#2c82cc"/><path d="m6 24 17 8v12L7 35z" fill="#c52b37"/><path d="m6 24 17 4v6z" fill="#eef2f5"/><path d="m27 18 18-6-1 11-17 4z" fill="#2a82cd"/><path d="m27 18 16 14-16 11z" fill="#e7edf2"/><path d="m27 43 16-12 1 4-16 9z" fill="#c52b37"/><circle cx="31" cy="30" r="2" fill="#e5c443"/></svg>
      <span class="brand-word">PHCORNER</span>
    </div>
  </footer>
</div>
<script src="https://cdn.jsdelivr.net/npm/bootstrap@5.3.0/dist/js/bootstrap.bundle.min.js"></script>
</body>
</html>
